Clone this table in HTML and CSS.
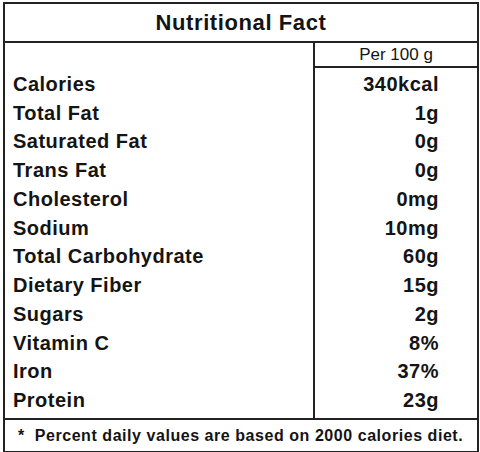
FILE: index.html
```html
<!DOCTYPE html>
<html lang="en">
<head>
  <meta charset="UTF-8" />
  <meta name="viewport" content="width=device-width,initial-scale=1" />
  <title>Nutritional Fact</title>
  <link rel="stylesheet" href="styles.css">
</head>
<body>

  <table class="facts">
    <thead>
      <tr><th colspan="2" class="title">Nutritional Fact</th></tr>
      <tr><th class="blank"></th><th class="per">Per 100 g</th></tr>
    </thead>
    <tbody>
      <tr class="first"><td>Calories</td><td class="val">340kcal</td></tr>
      <tr><td>Total Fat</td><td class="val">1g</td></tr>
      <tr><td>Saturated Fat</td><td class="val">0g</td></tr>
      <tr><td>Trans Fat</td><td class="val">0g</td></tr>
      <tr><td>Cholesterol</td><td class="val">0mg</td></tr>
      <tr><td>Sodium</td><td class="val">10mg</td></tr>
      <tr><td>Total Carbohydrate</td><td class="val">60g</td></tr>
      <tr><td>Dietary Fiber</td><td class="val">15g</td></tr>
      <tr><td>Sugars</td><td class="val">2g</td></tr>
      <tr><td>Vitamin C</td><td class="val">8%</td></tr>
      <tr><td>Iron</td><td class="val">37%</td></tr>
      <tr class="last"><td>Protein</td><td class="val">23g</td></tr>
    </tbody>
    <tfoot>
      <tr><td colspan="2" class="note">*&nbsp; Percent daily values are based on 2000 calories diet.</td></tr>
    </tfoot>
  </table>

</body>
</html>
```

FILE: styles.css
```css
:root {
  --ink: #141414;
  --line: #232323;
}
* { box-sizing: border-box; margin:0; padding:0; }
body {
  font-family: 'Liberation Sans', Arial, sans-serif;
  background: #fff;
  color: var(--ink);
}

.facts {
  margin: 2px 0 0 3px;
  width: 476px;
  border-collapse: collapse;
  border: 2px solid var(--line);
}
.facts th, .facts td { padding:0; }

.facts .title {
  height: 39px;
  font-size: 22px; font-weight:700;
  letter-spacing: .6px;
  text-align:center;
  border-bottom: 2px solid var(--line);
}
.facts .blank { width: 310px; }
.facts .per {
  height: 25px;
  font-family: 'Liberation Sans Narrow', 'Liberation Sans', sans-serif;
  font-stretch: condensed;
  font-size: 17px; font-weight:400;
  text-align:center;
  border-left: 2px solid var(--line);
  border-bottom: 2px solid var(--line);
}

.facts tbody td {
  height: 28.75px;
  font-size: 20px; font-weight:700;
  letter-spacing: .5px;
  padding-left: 8px;
}
.facts tbody .val {
  text-align:right;
  padding: 0 38px 0 0;
  border-left: 2px solid var(--line);
}
.facts tbody tr.first td { height: 31.75px; padding-top:3px; }
.facts tbody tr.last td { height: 32.75px; padding-bottom:4px; }

.facts .note {
  height: 33px;
  font-size: 16px; font-weight:700;
  letter-spacing: .55px;
  padding-left: 13px;
  border-top: 2px solid var(--line);
}
```
